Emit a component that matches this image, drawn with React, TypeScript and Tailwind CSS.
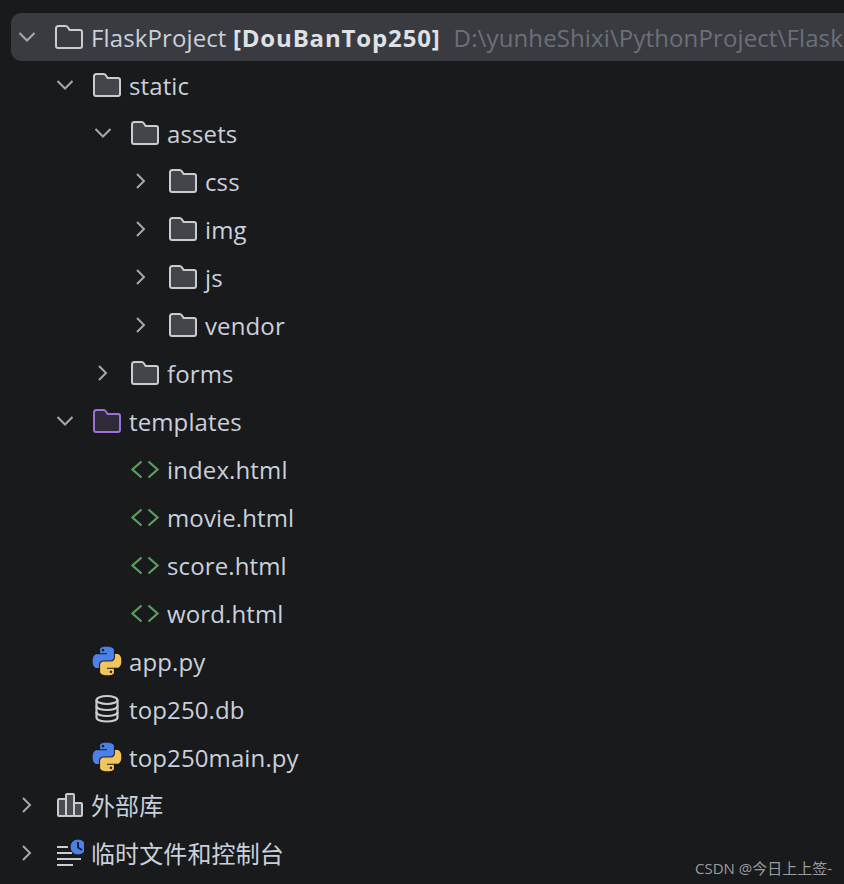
import React from "react";

const FOLDER = "M2 6.5Q2 4 4.5 4H11.5Q13 4 14 5.5L15.5 8H26Q28 8 28 10V24Q28 26 26 26H4Q2 26 2 24Z";

function Folder({ stroke = "#c9ccd1", fill = "#43454a" }: { stroke?: string; fill?: string }) {
  return (
    <svg width="30" height="30" viewBox="0 0 30 30" fill={fill} stroke={stroke} strokeWidth="2" strokeLinejoin="round">
      <path d={FOLDER} />
    </svg>
  );
}

function Html() {
  return (
    <svg width="30" height="30" viewBox="0 0 30 30" fill="none" stroke="#5a9e5f" strokeWidth="2.3">
      <path d="M11.5 7.5L2.5 15.5L11.5 23.5" />
      <path d="M18.5 7.5L27.5 15.5L18.5 23.5" />
    </svg>
  );
}

function Python() {
  return (
    <svg width="30" height="30" viewBox="-0.6 -0.6 25.2 25.2">
      <path fillRule="evenodd" fill="#4b82ea" d="M14.25.18l.9.2.73.26.59.3.45.32.34.34.25.34.16.33.1.3.04.26.02.2-.01.13V8.5l-.05.63-.13.55-.21.46-.26.38-.3.31-.33.25-.35.19-.35.14-.33.1-.3.07-.26.04-.21.02H8.77l-.69.05-.59.14-.5.22-.41.27-.33.32-.27.35-.2.36-.15.37-.1.35-.07.32-.04.27-.02.21v3.06H3.17l-.21-.03-.28-.07-.32-.12-.35-.18-.36-.26-.36-.36-.35-.46-.32-.59-.28-.73-.21-.88-.14-1.05-.05-1.23.06-1.22.16-1.04.24-.87.32-.71.36-.57.4-.44.42-.33.42-.24.4-.16.36-.1.32-.05.24-.01h.16l.06.01h8.16v-.83H6.18l-.01-2.75-.02-.37.05-.34.11-.31.17-.28.25-.26.31-.23.38-.2.44-.18.51-.15.58-.12.64-.1.71-.06.77-.04.84-.02 1.27.05zm-6.3 1.98l-.23.33-.08.41.08.41.23.34.33.22.41.09.41-.09.33-.22.23-.34.08-.41-.08-.41-.23-.33-.33-.22-.41-.09-.41.09z" />
      <path fillRule="evenodd" fill="#f2c55c" d="M21.04 6.11l.28.06.32.12.35.18.36.27.36.35.35.47.32.59.28.73.21.88.14 1.04.05 1.23-.06 1.23-.16 1.04-.24.86-.32.71-.36.57-.4.45-.42.33-.42.24-.4.16-.36.09-.32.05-.24.02-.16-.01h-8.22v.82h5.84l.01 2.76.02.36-.05.34-.11.31-.17.29-.25.25-.31.24-.38.2-.44.17-.51.15-.58.13-.64.09-.71.07-.77.04-.84.01-1.27-.04-1.07-.14-.9-.2-.73-.25-.59-.3-.45-.33-.34-.34-.25-.34-.16-.33-.1-.3-.04-.25-.02-.2.01-.13v-5.34l.05-.64.13-.54.21-.46.26-.38.3-.32.33-.24.35-.2.35-.14.33-.1.3-.06.26-.04.21-.02.13-.01h5.84l.69-.05.59-.14.5-.21.41-.28.33-.32.27-.35.2-.36.15-.36.1-.35.07-.32.04-.28.02-.21V6.07h2.09l.14.01zm-6.47 14.25l-.23.33-.08.41.08.41.23.33.33.23.41.08.41-.08.33-.23.23-.33.08-.41-.08-.41-.23-.33-.33-.23-.41-.08-.41.08z" />
    </svg>
  );
}

function Db() {
  return (
    <svg width="30" height="30" viewBox="0 0 30 30" fill="none" stroke="#c9ccd1" strokeWidth="2.2">
      <ellipse cx="15" cy="6" rx="10.5" ry="4" />
      <path d="M4.5 6V23.5C4.5 26 9.5 27.5 15 27.5S25.5 26 25.5 23.5V6" />
      <path d="M4.5 12C4.5 14.5 9.5 16 15 16S25.5 14.5 25.5 12" />
      <path d="M4.5 18C4.5 20.5 9.5 22 15 22S25.5 20.5 25.5 18" />
    </svg>
  );
}

function Library() {
  return (
    <svg width="30" height="30" viewBox="0 0 30 30" fill="#4b4d52" stroke="#c9ccd1" strokeWidth="2" strokeLinejoin="round">
      <rect x="4" y="9" width="8" height="17" rx="1" />
      <rect x="12" y="4" width="8" height="22" rx="1" />
      <rect x="20" y="13" width="8" height="13" rx="1" />
    </svg>
  );
}

function Scratch() {
  return (
    <svg width="30" height="30" viewBox="0 0 30 30" fill="none">
      <path d="M3 9H14M3 15H18M3 21H27M3 27H19" stroke="#c9ccd1" strokeWidth="2" />
      <circle cx="24" cy="9" r="8" fill="#4b82ea" stroke="#191a1c" strokeWidth="1" />
      <path d="M24 4V9.5L28 12" stroke="#191a1c" strokeWidth="1.8" />
    </svg>
  );
}

function Chevron({ dir }: { dir: "down" | "right" }) {
  return (
    <svg width="18" height="18" viewBox="0 0 18 18" fill="none" stroke="#a5a8ad" strokeWidth="2">
      {dir === "down" ? <path d="M1.5 5L9 12.5L16.5 5" /> : <path d="M5 2L12 9L5 16" />}
    </svg>
  );
}

type RowProps = {
  indent: string;
  chevron?: "down" | "right";
  icon: React.ReactNode;
  children: React.ReactNode;
  selected?: boolean;
};

function Row({ indent, chevron, icon, children, selected }: RowProps) {
  return (
    <div className={`flex h-12 items-center ${indent} ${selected ? "ml-[11px] rounded-l-[10px] bg-[#3a3b40]" : ""}`}>
      <span className="flex w-[18px] shrink-0 justify-center">{chevron ? <Chevron dir={chevron} /> : null}</span>
      <span className="ml-[18px] flex w-[30px] shrink-0">{icon}</span>
      <span className="ml-[7px] pt-[2px] text-[#c9d0dc]">{children}</span>
    </div>
  );
}

export default function App() {
  return (
    <div
      className="relative h-[884px] w-[844px] overflow-hidden whitespace-nowrap bg-[#191a1c] pt-[13px] text-[24px] leading-[32px] tracking-[0.12px]"
      style={{ fontFamily: '"Open Sans", "Noto Sans CJK SC", sans-serif' }}
    >
      <Row indent="pl-[7px]" chevron="down" icon={<Folder fill="#3a3b40" />} selected>
        FlaskProject <b className="font-bold tracking-[0.85px] text-[#dfe1e5]">[DouBanTop250]</b>
        <span className="ml-[13px] text-[#6a7079]">D:\yunheShixi\PythonProject\FlaskProject</span>
      </Row>
      <Row indent="pl-[56px]" chevron="down" icon={<Folder />}>static</Row>
      <Row indent="pl-[94px]" chevron="down" icon={<Folder />}>assets</Row>
      <Row indent="pl-[132px]" chevron="right" icon={<Folder />}>css</Row>
      <Row indent="pl-[132px]" chevron="right" icon={<Folder />}>img</Row>
      <Row indent="pl-[132px]" chevron="right" icon={<Folder />}>js</Row>
      <Row indent="pl-[132px]" chevron="right" icon={<Folder />}>vendor</Row>
      <Row indent="pl-[94px]" chevron="right" icon={<Folder />}>forms</Row>
      <Row indent="pl-[56px]" chevron="down" icon={<Folder stroke="#9d71dc" fill="#2f2a38" />}>templates</Row>
      <Row indent="pl-[94px]" icon={<Html />}>index.html</Row>
      <Row indent="pl-[94px]" icon={<Html />}>movie.html</Row>
      <Row indent="pl-[94px]" icon={<Html />}>score.html</Row>
      <Row indent="pl-[94px]" icon={<Html />}>word.html</Row>
      <Row indent="pl-[56px]" icon={<Python />}>app.py</Row>
      <Row indent="pl-[56px]" icon={<Db />}>top250.db</Row>
      <Row indent="pl-[56px]" icon={<Python />}>top250main.py</Row>
      <Row indent="pl-[18px]" chevron="right" icon={<Library />}>外部库</Row>
      <Row indent="pl-[18px]" chevron="right" icon={<Scratch />}>临时文件和控制台</Row>
      <div className="absolute left-[695px] top-[858px] text-[15px] leading-5 tracking-normal text-[#9a9c9f]">
        CSDN @今日上上签-
      </div>
    </div>
  );
}
